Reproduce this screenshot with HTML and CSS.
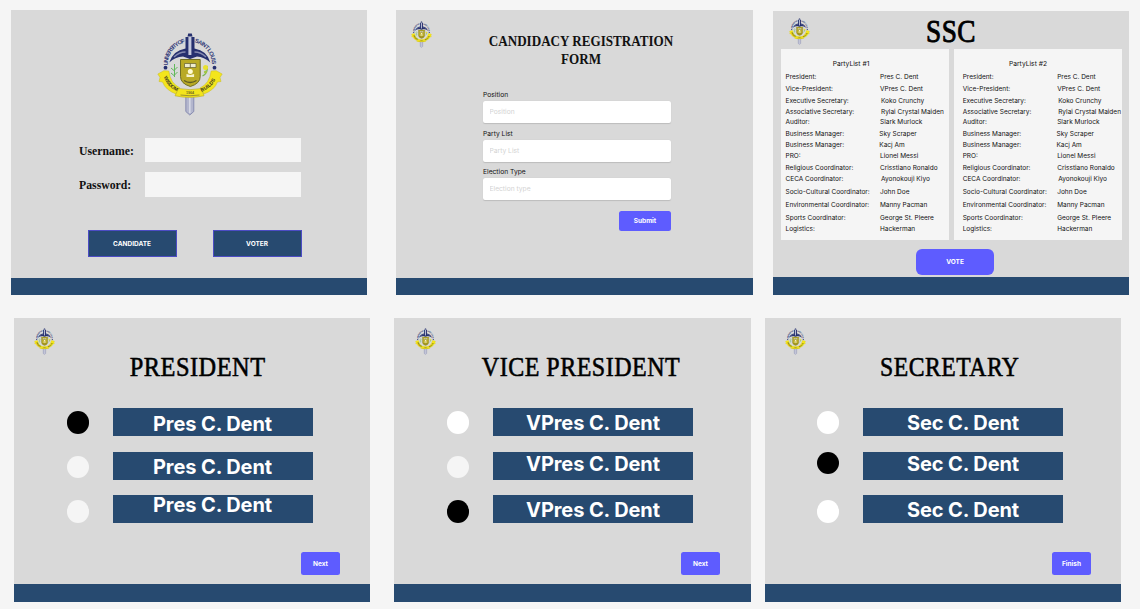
FILE: index.html
```html
<!DOCTYPE html>
<html lang="en">
<head>
<meta charset="utf-8">
<title>Student Council Election</title>
<link rel="stylesheet" href="styles.css">
</head>
<body>
<svg class="defs" width="0" height="0" aria-hidden="true">
  <symbol id="seal" viewBox="0 0 66 84" overflow="visible">
    <path id="ring-left" d="M10.800 33.500A22.200 22.200 0 0 1 29 10.400" fill="none"/>
    <path id="ring-right" d="M37.500 10.400A22.200 22.200 0 0 1 54.800 33.500" fill="none"/>
    <text class="seal-ring"><textPath href="#ring-left" textLength="31">UNIVERSITY OF</textPath></text>
    <text class="seal-ring"><textPath href="#ring-right" textLength="30">SAINT LOUIS</textPath></text>
    <circle cx="8.500" cy="35.700" r="1.900" fill="#26306f"/>
    <circle cx="57.500" cy="35.700" r="1.900" fill="#26306f"/>
    <path d="M28.800 62h8v17.500l-4 3.500-4-3.500z" fill="#b3b6cd" stroke="#7a7fa8" stroke-width=".8"/>
    <path d="M32.800 62v19" stroke="#d6d8e4" stroke-width="1.600"/>
    <path d="M12.300 30.500Q16 18.500 28.500 16.500V5h9v11.500Q50 18.500 53.300 30.500 47 25 40 24.500L33 27l-7-2.500Q18 25 12.300 30.500z" fill="#26306f"/>
    <path d="M17 25q5-5 11.500-5M49 25q-5-5-11.500-5" stroke="#858ab0" stroke-width="1.300" fill="none"/>
    <path d="M32.900 5v18" stroke="#c5c9dd" stroke-width="3"/>
    <path d="M30.500 4.500l.7-3h3.600l.7 3z" fill="#26306f"/>
    <path d="M23.500 27.500h19.700v17q0 7-9.850 10Q23.500 51.500 23.500 44.500z" fill="#b9aa25" stroke="#716e24" stroke-width="1"/>
    <path d="M27.500 31.500h11.500v4H27.500z" fill="#eeeccd" stroke="#615f30" stroke-width=".7"/>
    <path d="M33.300 31.500v4" stroke="#615f30" stroke-width=".8"/>
    <circle cx="33.300" cy="39.500" r="2.500" fill="#fffbd4"/>
    <path d="M29.500 42l3.800 1 3.800-1v3H29.500z" fill="#f6f3ce"/>
    <path d="M27 48.500q6 4 12.500 0" stroke="#5c5a24" stroke-width="1.400" fill="none"/>
    <path d="M17.500 45V32m0 12l-3.500-3m3.500 2l3-3m-3-1l-3.500-3m3.500 2l3-3" stroke="#62b95c" stroke-width="1" fill="none"/>
    <path d="M45.500 44q6-3 4.500-10" stroke="#72b54f" stroke-width="1.300" fill="none"/>
    <circle cx="48.500" cy="35.500" r="2.500" fill="#e9e02f"/>
    <circle cx="48.500" cy="40" r="1.600" fill="#a4c840"/>
    <path d="M.8 42l6-3.300 5 .3Q13.500 51.500 23 56l-4 6Q8.500 58 5.500 50L2 49.500l1-4z" fill="#f3e51c" stroke="#c5b928" stroke-width=".5"/>
    <path d="M65.200 42l-6-3.300-5 .3Q52.500 51.500 43 56l4 6Q57.500 58 60.500 50l3.500-.5-1-4z" fill="#f3e51c" stroke="#c5b928" stroke-width=".5"/>
    <path d="M21.500 56.500q11.500 2.300 23 0l2.500 7.300q-14.500 3.200-29 0z" fill="#f3e51c" stroke="#b6aa25" stroke-width=".6"/>
    <path id="left-fold" d="M6.800 45Q10.500 55.500 21.500 60" fill="none"/>
    <path id="right-fold" d="M44.500 60Q55.500 55.500 59.500 45" fill="none"/>
    <text class="seal-motto"><textPath href="#left-fold" textLength="20">WISDOM</textPath></text>
    <text class="seal-motto"><textPath href="#right-fold" textLength="19">BUILDS</textPath></text>
    <text class="seal-year" x="33" y="61.500" text-anchor="middle">1964</text>
    <path d="M23.500 63q9.500 1.500 19 0" stroke="#9d9230" stroke-width="1" fill="none"/>
  </symbol>
</svg>

<main class="board">
  <div class="row row-top">
    <section class="frame login">
      <svg class="seal-large"><use href="#seal"/></svg>
      <form class="login-form">
        <label for="user"><span>Username:</span></label><input id="user" class="login-input" type="text">
        <label for="pass"><span>Password:</span></label><input id="pass" class="login-input" type="password">
      </form>
      <div class="roles">
        <button class="role">CANDIDATE</button>
        <button class="role">VOTER</button>
      </div>
      <div class="footer"></div>
    </section>

    <section class="frame registration">
      <svg class="seal-small"><use href="#seal"/></svg>
      <h1 class="form-title">CANDIDACY REGISTRATION<br>FORM</h1>
      <form class="fields">
        <label class="field"><span>Position</span><input type="text" placeholder="Position"></label>
        <label class="field"><span>Party List</span><input type="text" placeholder="Party List"></label>
        <label class="field"><span>Election Type</span><input type="text" placeholder="Election type"></label>
        <button class="action submit" type="button">Submit</button>
      </form>
      <div class="footer"></div>
    </section>

    <section class="frame parties">
      <svg class="seal-small"><use href="#seal"/></svg>
      <h1 class="title ssc">SSC</h1>
      <div class="panels">
        <article class="panel first">
          <h2>PartyList #1</h2>
          <dl>
            <dt>President:</dt><dd>Pres C. Dent</dd>
            <dt>Vice-President:</dt><dd>VPres C. Dent</dd>
            <dt>Executive Secretary:</dt><dd class="in">Koko Crunchy</dd>
            <dt>Associative Secretary:</dt><dd class="in">Rylai Crystal Maiden</dd>
            <dt>Auditor:</dt><dd>Slark Murlock</dd>
            <dt>Business Manager:</dt><dd class="out">Sky Scraper</dd>
            <dt>Business Manager:</dt><dd class="out">Kacj Am</dd>
            <dt>PRO:</dt><dd>Lionel Messi</dd>
            <dt>Religious Coordinator:</dt><dd>Crisstiano Ronaldo</dd>
            <dt>CECA Coordinator:</dt><dd class="in">Ayonokouji Kiyo</dd>
            <dt>Socio-Cultural Coordinator:</dt><dd>John Doe</dd>
            <dt>Environmental Coordinator:</dt><dd>Manny Pacman</dd>
            <dt>Sports Coordinator:</dt><dd>George St. Pleere</dd>
            <dt>Logistics:</dt><dd>Hackerman</dd>
          </dl>
        </article>
        <article class="panel second">
          <h2>PartyList #2</h2>
          <dl>
            <dt>President:</dt><dd>Pres C. Dent</dd>
            <dt>Vice-President:</dt><dd>VPres C. Dent</dd>
            <dt>Executive Secretary:</dt><dd class="in">Koko Crunchy</dd>
            <dt>Associative Secretary:</dt><dd class="in">Rylai Crystal Maiden</dd>
            <dt>Auditor:</dt><dd>Slark Murlock</dd>
            <dt>Business Manager:</dt><dd class="out">Sky Scraper</dd>
            <dt>Business Manager:</dt><dd class="out">Kacj Am</dd>
            <dt>PRO:</dt><dd>Lionel Messi</dd>
            <dt>Religious Coordinator:</dt><dd>Crisstiano Ronaldo</dd>
            <dt>CECA Coordinator:</dt><dd class="in">Ayonokouji Kiyo</dd>
            <dt>Socio-Cultural Coordinator:</dt><dd>John Doe</dd>
            <dt>Environmental Coordinator:</dt><dd>Manny Pacman</dd>
            <dt>Sports Coordinator:</dt><dd>George St. Pleere</dd>
            <dt>Logistics:</dt><dd>Hackerman</dd>
          </dl>
        </article>
      </div>
      <button class="action vote">VOTE</button>
      <div class="footer"></div>
    </section>
  </div>

  <div class="row row-bottom">
    <section class="frame ballot president">
      <svg class="seal-small"><use href="#seal"/></svg>
      <h1 class="title">PRESIDENT</h1>
      <div class="choices">
        <div class="radios"><i class="radio picked"></i><i class="radio dim"></i><i class="radio dim"></i></div>
        <div class="names"><div class="name low">Pres C. Dent</div><div class="name mid">Pres C. Dent</div><div class="name top">Pres C. Dent</div></div>
      </div>
      <button class="action next">Next</button>
      <div class="footer"></div>
    </section>

    <section class="frame ballot vice">
      <svg class="seal-small"><use href="#seal"/></svg>
      <h1 class="title">VICE PRESIDENT</h1>
      <div class="choices">
        <div class="radios"><i class="radio"></i><i class="radio dim"></i><i class="radio picked"></i></div>
        <div class="names"><div class="name">VPres C. Dent</div><div class="name high">VPres C. Dent</div><div class="name">VPres C. Dent</div></div>
      </div>
      <button class="action next">Next</button>
      <div class="footer"></div>
    </section>

    <section class="frame ballot secretary">
      <svg class="seal-small"><use href="#seal"/></svg>
      <h1 class="title">SECRETARY</h1>
      <div class="choices">
        <div class="radios"><i class="radio"></i><i class="radio picked raised"></i><i class="radio"></i></div>
        <div class="names"><div class="name">Sec C. Dent</div><div class="name high">Sec C. Dent</div><div class="name">Sec C. Dent</div></div>
      </div>
      <button class="action next">Finish</button>
      <div class="footer"></div>
    </section>
  </div>
</main>
</body>
</html>
```

FILE: styles.css
```css
* { box-sizing: border-box; margin: 0; padding: 0; }

body {
  width: 1140px;
  height: 609px;
  overflow: hidden;
  background: #f5f5f5;
  color: #111;
  font-family: Inter, "Liberation Sans", sans-serif;
}

svg { overflow: visible; }
.defs { display: block; height: 0; }
.seal-ring { font: bold 5.8px "Liberation Sans", sans-serif; fill: #333b78; }
.seal-motto { font: bold 5px "Liberation Sans", sans-serif; fill: #3b391f; }
.seal-year { font: bold 3.6px "Liberation Sans", sans-serif; fill: #6b6524; }

button, input { font-family: inherit; border: 0; outline: 0; }

.board { display: flex; flex-direction: column; gap: 23px; padding-top: 10px; }
.row { display: flex; align-items: flex-end; }
.row-top { gap: 29px; padding-left: 11px; height: 285px; }
.row-bottom { gap: 24px; padding-left: 14px; height: 284px; }

.frame {
  display: flex;
  flex-direction: column;
  flex: none;
  width: 356px;
  height: 100%;
  background: #d9d9d9;
}
.footer { height: 17px; margin-top: auto; background: #274a70; }
.seal-small { display: block; width: 21px; height: 27px; flex: none; }

/* Serif headings are set slightly condensed */
.title {
  width: 356px;
  height: 34px;
  flex: none;
  font: 400 28px/34px "Liberation Serif", serif;
  color: #000;
  text-align: center;
  white-space: nowrap;
  letter-spacing: .6px;
  -webkit-text-stroke: .6px #000;
}

.action {
  flex: none;
  background: #5e5cff;
  color: #fff;
  font-weight: 700;
  font-size: 6.500px;
  border-radius: 2.500px;
}

/* Login */
.seal-large { display: block; width: 66px; height: 84px; margin: 22px 0 0 145.500px; flex: none; }
.login-form {
  display: grid;
  grid-template-columns: 66px 156px;
  grid-template-rows: 24px 25px;
  row-gap: 10px;
  margin: 22px 0 0 68px;
}
.login-form label { font: bold 12.500px/26px "Liberation Serif", serif; }
.login-form label span { display: inline-block; transform: scaleX(.94); transform-origin: left; }
.login-input { width: 156px; height: 100%; background: #f5f5f5; }
.roles { display: flex; gap: 36px; margin: 33px 0 0 76.600px; }
.role {
  width: 89px;
  height: 27px;
  background: #274a70;
  border: 1px solid #4c4cc4;
  color: #fff;
  font-size: 6.500px;
  font-weight: 700;
}

/* Registration */
.row-top .registration { width: 357px; }
.registration .seal-small { margin: 11px 0 0 15px; }
.form-title {
  font: bold 15.500px/17.500px "Liberation Serif", serif;
  width: 260px;
  height: 35px;
  margin: -16px 0 0 54.500px;
  text-align: center;
  transform: scaleX(.845);
}
.fields { display: flex; flex-direction: column; width: 188px; margin: 22px 0 0 87px; }
.field { height: 38.600px; font-size: 6.700px; line-height: 12px; }
.field span { display: block; height: 12px; }
.field input {
  display: block;
  width: 188px;
  height: 22px;
  padding: 0 6.500px;
  background: #fff;
  border-radius: 2px;
  font-size: 6.700px;
  box-shadow: 0 .5px 1px #0002;
}
.field input::placeholder { color: #d3d3d3; opacity: 1; }
.submit { align-self: flex-end; width: 52px; height: 20px; margin-top: 6px; }

/* Party lists */
.row-top .parties { height: 284px; margin-left: -9px; }
.parties .seal-small { margin: 7px 0 0 16px; }
.ssc { font-size: 31px; margin-top: -30px; -webkit-text-stroke: .9px #000; transform: scaleX(.88); }
.panels { display: flex; gap: 5px; margin: 0 0 0 8px; }
.panel { width: 168px; height: 191px; padding-top: 9.500px; background: #f5f5f5; font-size: 6.500px; }
.panel h2 { height: 10px; font-size: 6.700px; line-height: 10px; font-weight: 400; text-align: center; }
.panel.first h2 { padding-right: 28px; }
.panel.second h2 { padding-right: 20px; }
.panel dl {
  display: grid;
  grid-template-columns: 94.500px auto;
  grid-template-rows: 13px 12px 12px 11px 10.800px 11.500px 11.500px 11px 11.500px 11.500px 13px 12.800px 12.800px 10.800px;
  align-items: end;
  padding-left: 4.500px;
  line-height: 10px;
  white-space: nowrap;
}
.panel.second dl { padding-left: 8.700px; }
.panel dd.in { padding-left: 1px; }
.panel dd.out { margin-left: -.700px; }
.vote { width: 78px; height: 26px; margin: 9px 0 0 143px; border-radius: 6px; }

/* Ballots */
.ballot .seal-small { margin: 10px 0 0 19.500px; }
.ballot .title { margin-top: -5px; }
.president .title { padding-left: 13px; transform: scaleX(.87); }
.vice .title { padding-left: 21px; transform: scaleX(.856); }
.secretary .title { padding-left: 16px; transform: scaleX(.845); }
.choices { display: flex; height: 115px; margin: 24px 0 0 52.500px; }
.radios { display: flex; flex-direction: column; gap: 22.200px; width: 46px; padding-top: 3.300px; }
.radio { width: 22.400px; height: 22.400px; border-radius: 50%; background: #fff; }
.radio.dim { background: #f5f5f5; }
.radio.picked { background: #000; }
.radio.raised { transform: translateY(-4px); }
.names { display: grid; grid-template-rows: 28px 28px 28px; row-gap: 16px; align-content: start; }
.name {
  width: 200px;
  height: 28px;
  background: #274a70;
  color: #fff;
  font-size: 20px;
  line-height: 30px;
  letter-spacing: -.1px;
  font-weight: 700;
  text-align: center;
}
.name:last-child { margin-top: -1px; height: 28px; }
.name.low { line-height: 33px; }
.name.mid { line-height: 30px; }
.name.top { line-height: 20px; }
.name.high { line-height: 25px; }
.next { width: 39px; height: 23px; margin: 29px 0 0 287px; }
.row-bottom .footer, .parties .footer { height: 18px; }
.vice .seal-small { margin-left: 20.500px; }
.vice .choices { margin-left: 53px; }
.row-bottom .vice { width: 357px; margin-right: -10px; }
.secretary .choices { margin-left: 52px; }
```
